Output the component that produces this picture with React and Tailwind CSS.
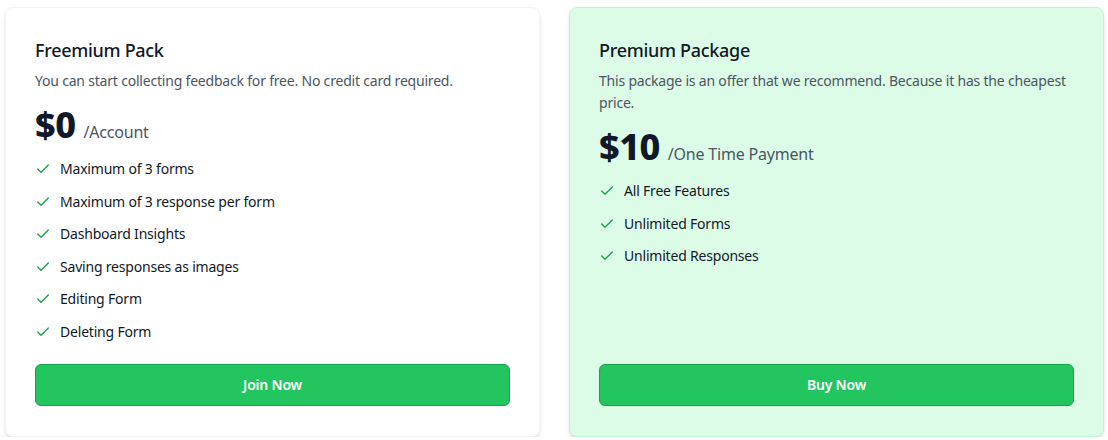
import { Check } from "lucide-react";

const plans = [
  {
    name: "Freemium Pack",
    desc: "You can start collecting feedback for free. No credit card required.",
    price: "$0",
    unit: "/Account",
    features: [
      "Maximum of 3 forms",
      "Maximum of 3 response per form",
      "Dashboard Insights",
      "Saving responses as images",
      "Editing Form",
      "Deleting Form",
    ],
    cta: "Join Now",
    highlight: false,
  },
  {
    name: "Premium Package",
    desc: "This package is an offer that we recommend. Because it has the cheapest price.",
    price: "$10",
    unit: "/One Time Payment",
    features: ["All Free Features", "Unlimited Forms", "Unlimited Responses"],
    cta: "Buy Now",
    highlight: true,
  },
];

const PlanCard = ({ plan }) => {
  return (
    <div
      className={
        plan.highlight
          ? "flex flex-col rounded-lg border border-[#bbf7d0] bg-[#dcfce7] px-[29px] pt-[28px] pb-[30px] shadow-md"
          : "flex flex-col rounded-lg border border-gray-100 bg-white px-[29px] pt-[28px] pb-[30px] shadow-md"
      }
    >
      <h3 className="text-lg leading-7 font-medium tracking-[-0.3px] text-[#111827]">{plan.name}</h3>
      <p className="mt-[6px] text-sm leading-[22px] tracking-[-0.2px] text-[#4b5563]">{plan.desc}</p>
      <div className="mt-[13px] flex items-baseline gap-2">
        <span className="text-4xl leading-10 font-extrabold tracking-[-0.5px] text-[#111827]">{plan.price}</span>
        <span className="text-base tracking-[-0.2px] text-[#4b5563]">{plan.unit}</span>
      </div>
      <ul className="mt-[14px] flex flex-col gap-[12.6px]">
        {plan.features.map((f) => (
          <li key={f} className="flex items-center gap-[9px] text-sm leading-5 tracking-[-0.2px] text-[#111827]">
            <Check size={16} strokeWidth={2} className="text-[#16a34a]" />
            {f}
          </li>
        ))}
      </ul>
      <button className="mt-auto h-[42px] w-full rounded-md border border-[#16a34a] bg-[#22c55e] text-sm font-semibold tracking-[-0.2px] text-white">
        {plan.cta}
      </button>
    </div>
  );
};

const App = () => {
  return (
    <div
      className="grid grid-cols-2 gap-[29px] pt-[7px] pr-[4px] pl-[5px]"
      style={{ fontFamily: '"Noto Sans", sans-serif' }}
    >
      {plans.map((p) => (
        <div key={p.name} className="flex h-[430px] flex-col [&>div]:flex-1">
          <PlanCard plan={p} />
        </div>
      ))}
    </div>
  );
};

export default App;
